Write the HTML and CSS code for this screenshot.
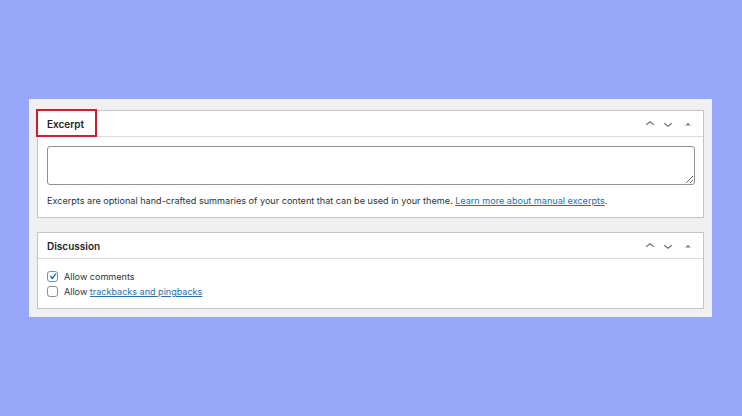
FILE: index.html
```html
<!DOCTYPE html>
<html lang="en">
<head>
<meta charset="utf-8">
<title>Excerpt and Discussion</title>
<link rel="stylesheet" href="styles.css">
</head>
<body>
<div class="stage">
  <div class="metaboxes">
    <section class="postbox">
      <div class="postbox-header">
        <h2 class="hndle highlighted">Excerpt</h2>
        <div class="handle-actions">
          <button class="handle-btn" aria-label="Move up"><svg viewBox="0 0 24 24" width="18" height="18"><path d="M6.5 12.4L12 8l5.5 4.4-.9 1.2L12 10l-4.5 3.6-1-1.2z"/></svg></button>
          <button class="handle-btn" aria-label="Move down"><svg viewBox="0 0 24 24" width="18" height="18"><path d="M17.5 11.6L12 16l-5.5-4.4.9-1.2L12 14l4.5-3.6 1 1.2z"/></svg></button>
          <button class="handle-btn toggle" aria-label="Toggle panel"><svg viewBox="0 0 24 24" width="18" height="18"><polygon points="8.5,14 12,10.2 15.5,14"/></svg></button>
        </div>
      </div>
      <div class="inside">
        <textarea class="excerpt-field" aria-label="Excerpt"></textarea>
        <p class="help">Excerpts are optional hand-crafted summaries of your content that can be used in your theme. <a href="#">Learn more about manual excerpts</a>.</p>
      </div>
    </section>

    <section class="postbox">
      <div class="postbox-header">
        <h2 class="hndle">Discussion</h2>
        <div class="handle-actions">
          <button class="handle-btn" aria-label="Move up"><svg viewBox="0 0 24 24" width="18" height="18"><path d="M6.5 12.4L12 8l5.5 4.4-.9 1.2L12 10l-4.5 3.6-1-1.2z"/></svg></button>
          <button class="handle-btn" aria-label="Move down"><svg viewBox="0 0 24 24" width="18" height="18"><path d="M17.5 11.6L12 16l-5.5-4.4.9-1.2L12 14l4.5-3.6 1 1.2z"/></svg></button>
          <button class="handle-btn toggle" aria-label="Toggle panel"><svg viewBox="0 0 24 24" width="18" height="18"><polygon points="8.5,14 12,10.2 15.5,14"/></svg></button>
        </div>
      </div>
      <div class="inside discussion">
        <label class="check-row">
          <span class="box checked"><svg viewBox="0 0 20 20" width="13" height="13"><path d="M14.83 4.89l1.34.94-5.81 8.38H9.02L5.78 9.67l1.34-1.25 2.57 2.4z"/></svg></span>
          <span>Allow comments</span>
        </label>
        <label class="check-row">
          <span class="box"></span>
          <span>Allow <a href="#">trackbacks and pingbacks</a></span>
        </label>
      </div>
    </section>
  </div>
</div>
</body>
</html>
```

FILE: styles.css
```css
html, body {
  margin: 0;
  padding: 0;
}

body {
  background: #97a8fa;
  font-family: Inter, "Liberation Sans", Arial, sans-serif;
  color: #2c3338;
  width: 742px;
  height: 416px;
  overflow: hidden;
}

.stage {
  padding: 99px 0 0 29px;
}

.metaboxes {
  width: 667px;
  background: #f0f0f1;
  padding: 11px 8px 8px 8px;
}

.postbox {
  background: #fff;
  border: 1px solid #c3c4c7;
}

.postbox + .postbox {
  margin-top: 14px;
}

.postbox-header {
  height: 25px;
  border-bottom: 1px solid #dcdcde;
  display: flex;
  align-items: center;
  justify-content: space-between;
  padding: 0 6px 0 9px;
}

.hndle {
  position: relative;
  margin: 0;
  font-size: 10px;
  font-weight: 600;
  color: #1d2327;
  line-height: 14px;
}

.hndle.highlighted::after {
  content: "";
  position: absolute;
  left: -11px;
  top: -8px;
  width: 57px;
  height: 24px;
  border: 2px solid #cc1f30;
}

.handle-actions {
  display: flex;
  align-items: center;
}

.handle-btn {
  width: 18px;
  height: 18px;
  padding: 0;
  margin: 0;
  border: 0;
  background: none;
  display: flex;
  align-items: center;
  justify-content: center;
}

.handle-btn svg {
  display: block;
  fill: #50575e;
  opacity: 0.85;
}

.handle-btn.toggle {
  margin-left: 2px;
}

.handle-btn.toggle svg {
  fill: #646970;
}

.inside {
  padding: 9px 8px 8px 9px;
}

.excerpt-field {
  display: block;
  box-sizing: border-box;
  width: 648px;
  height: 39px;
  margin: 0;
  border: 1px solid #8c8f94;
  border-radius: 3px;
  background: #fff;
  resize: vertical;
  font-family: inherit;
}

.help {
  margin: 8px 0 0 0;
  font-size: 9.1px;
  line-height: 16px;
  color: #2c3338;
}

a {
  color: #2271b1;
  text-decoration: underline;
}

.inside.discussion {
  padding: 10px 8px 9px 9px;
}

.check-row {
  display: flex;
  align-items: center;
  height: 15px;
  font-size: 9.05px;
  color: #2c3338;
  gap: 6px;
}

.box {
  box-sizing: border-box;
  width: 11px;
  height: 11px;
  border: 1px solid #8c8f94;
  border-radius: 3px;
  background: #fff;
  display: flex;
  align-items: center;
  justify-content: center;
}

.box.checked {
  border-color: #7392b8;
}

.box svg {
  display: block;
  fill: #2271b1;
  flex: none;
}
```
